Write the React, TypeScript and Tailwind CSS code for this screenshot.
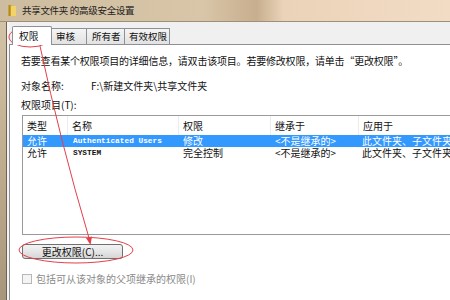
import type { ReactElement } from "react";

const CJK = "font-['SimSun','Noto_Sans_CJK_SC',sans-serif]";

type Row = { type: string; name: string; perm: string; from: string; applies: string; selected?: boolean };

const rows: Row[] = [
  { type: "允许", name: "Authenticated Users", perm: "修改", from: "<不是继承的>", applies: "此文件夹、子文件夹和文件", selected: true },
  { type: "允许", name: "SYSTEM", perm: "完全控制", from: "<不是继承的>", applies: "此文件夹、子文件夹和文件" },
];

const tabs = [
  { label: "审核", cls: "w-[35px] pl-[4px]" },
  { label: "所有者", cls: "w-[38px] pl-[5px]" },
  { label: "有效权限", cls: "w-[45px] pl-[4px]" },
];

function FolderIcon(): ReactElement {
  return (
    <svg width="10" height="13" viewBox="0 0 10 13" className="shrink-0">
      <rect x="0.5" y="1" width="4" height="11" fill="#d9b13b" />
      <rect x="3" y="2" width="5" height="10" fill="#f2d36a" />
      <rect x="0.5" y="1" width="2" height="11" fill="#b58a1e" />
    </svg>
  );
}

function Annotations(): ReactElement {
  return (
    <svg width="450" height="300" viewBox="0 0 450 300" className="absolute inset-0 pointer-events-none">
      <ellipse cx="30" cy="37" rx="21" ry="10" fill="none" stroke="#e2414a" strokeWidth="1" />
      <ellipse cx="76" cy="250" rx="57" ry="13" fill="none" stroke="#e2414a" strokeWidth="1" />
      <path d="M40 46 Q 60 140 89 238" fill="none" stroke="#e2414a" strokeWidth="1" />
      <polygon points="90.5,245 92,236.5 86,238" fill="#e2414a" />
    </svg>
  );
}

export default function App(): ReactElement {
  return (
    <div className={`relative w-[450px] h-[300px] overflow-hidden bg-white text-[10px] text-[#111] ${CJK}`}>
      {/* title bar */}
      <div className="h-[22px] flex items-center gap-[4px] pl-[8px] border-b border-[#9c8f7c] bg-[linear-gradient(to_right,#cdbc9f,#d9c6a8_45%,#c7ae8e_57%,#ead3b8_63%,#f2dcc4)]">
        <FolderIcon />
        <span className="text-[9.5px] text-[#1c1c1c] tracking-[-0.3px]">共享文件夹 的高级安全设置</span>
      </div>

      <div className="flex h-[278px]">
        {/* window frame */}
        <div className="w-[7px] shrink-0 bg-[linear-gradient(to_bottom,#d3c3a6,#bba88b_60%,#a8967c)] border-r border-[#6f6252]" />
        <div className="w-[2px] shrink-0 bg-[#f4f4f4]" />

        <div className="flex-1 min-w-0 flex flex-col bg-[#f0f0f0]">
          {/* tab strip */}
          <div className="h-[22px] shrink-0 flex items-end pl-[3px]">
            <div className="w-[40px] h-[19px] pl-[6px] flex items-center bg-white border border-b-0 border-[#8e9096] rounded-t-[2px] relative top-[1px] z-10 text-[9.7px]">
              权限
            </div>
            {tabs.map((t) => (
              <div
                key={t.label}
                className={`h-[16px] flex items-center border border-b-0 border-l-0 border-[#8e9096] bg-[linear-gradient(to_bottom,#f4f4f4,#e2e2e2)] text-[9.5px] whitespace-nowrap ${t.cls}`}
              >
                {t.label}
              </div>
            ))}
          </div>

          {/* panel */}
          <div className="flex-1 bg-white border-t border-l border-[#8e9096] pl-[11px] pt-[10px] leading-[12px]">
            <p className="whitespace-nowrap tracking-[-0.2px]">
              若要查看某个权限项目的详细信息，请双击该项目。若要修改权限，请单击“更改权限”。
            </p>
            <div className="mt-[13px] flex whitespace-nowrap">
              <span className="w-[70px]">对象名称:</span>
              <span>F:\新建文件夹\共享文件夹</span>
            </div>
            <p className="mt-[7px]">权限项目(T):</p>

            <div className="mt-[4px] ml-[1px] w-[440px] h-[120px] border border-[#9a9a9a] overflow-hidden">
              <div className="h-[19px] flex items-center">
                <div className="w-[45px] pl-[4px] border-r border-[#ececec] h-full flex items-center">类型</div>
                <div className="w-[111px] pl-[4px] border-r border-[#ececec] h-full flex items-center">名称</div>
                <div className="w-[92px] pl-[4px] border-r border-[#ececec] h-full flex items-center">权限</div>
                <div className="w-[88px] pl-[4px] border-r border-[#ececec] h-full flex items-center">继承于</div>
                <div className="flex-1 pl-[4px] h-full flex items-center">应用于</div>
              </div>
              {rows.map((r) => (
                <div
                  key={r.name}
                  className={`h-[12px] leading-[12px] flex items-center whitespace-nowrap ${r.selected ? "bg-[#3399ff] text-white" : ""}`}
                >
                  <div className="w-[45px] shrink-0 pl-[4px]">{r.type}</div>
                  <div className="w-[111px] shrink-0 pl-[5px] font-mono font-bold text-[7.8px]">{r.name}</div>
                  <div className="w-[92px] shrink-0 pl-[4px]">{r.perm}</div>
                  <div className="w-[88px] shrink-0 pl-[4px]">{r.from}</div>
                  <div className="flex-1 pl-[3px]">{r.applies}</div>
                </div>
              ))}
            </div>

            <button
              type="button"
              className="mt-[9px] ml-[1px] w-[101px] h-[15px] flex items-center justify-center rounded-[3px] border border-[#707070] bg-[linear-gradient(to_bottom,#f3f3f3,#e6e6e6_50%,#d6d6d6)] text-[10px] leading-none"
            >
              更改权限(C)...
            </button>

            <div className="mt-[14px] ml-[1px] flex items-center gap-[4px] text-[#8a8a8a]">
              <span className="w-[10px] h-[10px] border border-[#b8b8b8] bg-[#f4f4f4]" />
              <span className="whitespace-nowrap">包括可从该对象的父项继承的权限(I)</span>
            </div>
          </div>
        </div>
      </div>

      <Annotations />
    </div>
  );
}
